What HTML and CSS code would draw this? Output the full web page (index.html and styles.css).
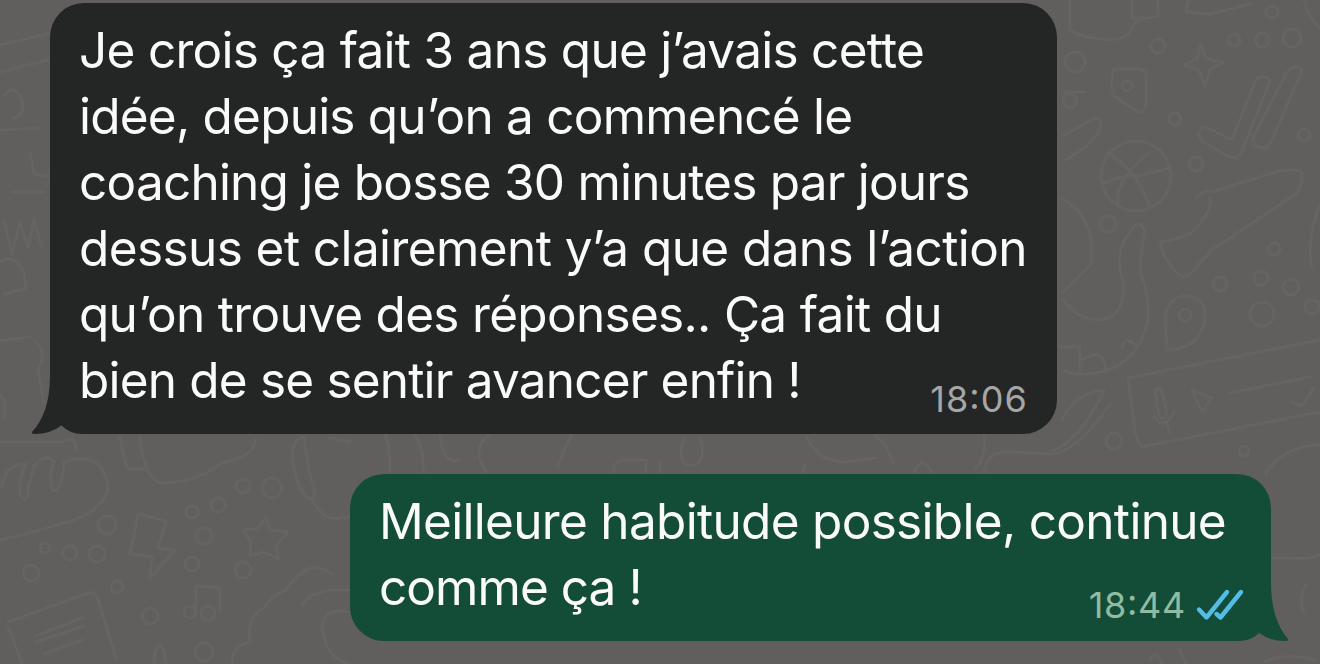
FILE: index.html
```
<!DOCTYPE html>
<html lang="fr">
<head>
    <meta charset="UTF-8">
    <meta name="viewport" content="width=device-width, initial-scale=1.0">
    <title>Discussion</title>
    <link rel="stylesheet" href="styles.css">
</head>
<body>
    <div class="chat">
        <svg class="wallpaper" viewBox="0 0 1320 664" aria-hidden="true">
            <!-- left side -->
            <path d="M0 45 L48 34 M0 72 L48 60 M4 96 q10 -14 18 4 q4 14 -8 18 M2 130 L40 128 M30 152 l4 22 l14 2 M12 192 h32 M4 220 l8 34 l8 -32 l8 26 l6 -30 l8 30 M0 262 q14 -10 24 10 l2 16 l-22 6 M0 341 l30 -4 M34 340 q14 12 4 30 l6 34 M0 394 q8 8 4 24"/>
            <path d="M0 442 h62 q14 -8 14 8 M2 488 q2 -24 24 -24 q-8 18 -6 32 q8 10 8 -8 l6 -22 q12 -14 20 -4 q-6 18 -2 28 q10 4 12 -28 q40 -12 44 26 q-4 22 -40 34 q-40 12 -68 18"/>
            <path d="M120 437 q4 26 8 32 h16 M140 437 q4 40 20 46 q36 0 62 -20 q32 -6 34 -24"/>
            <path d="M304 437 q-16 4 -10 30 q6 32 18 32 q6 -2 -2 -24 q-4 -20 -6 -38 M312 500 q12 22 28 18 l10 -2 M330 438 l20 4"/>
            <path d="M138 514 l28 7 l-8 27 l17 2 l-25 28 l2 -21 l-22 -3 z"/>
            <path d="M266 518 l4 12 l18 2 l-11 12 l1 15 l-14 -7 l-14 4 l1 -14 l-8 -12 l14 -1 z"/>
            <path d="M196 586 v24 M196 586 l24 2 v24"/>
            <circle cx="190" cy="612" r="6"/><circle cx="208" cy="613" r="7"/>
            <path d="M8 622 L88 593 q8 -2 10 6 l18 60 M8 626 l14 38 M36 636 l46 -18 M36 642 l48 -16 M44 654 l38 -14"/>
            <path d="M232 664 q0 -18 18 -22 q-4 -26 14 -34 q6 -12 22 -18 q22 -34 46 -16 M302 606 q8 -18 48 -16 M350 612 q-34 -6 -26 26 q6 22 26 26 M154 664 q2 -30 10 -12 l2 12"/>
            <circle cx="107" cy="525" r="9"/><circle cx="204" cy="536" r="8"/><circle cx="70" cy="553" r="7"/><circle cx="97" cy="554" r="8"/><circle cx="192" cy="512" r="6"/><circle cx="218" cy="505" r="7"/><circle cx="272" cy="488" r="10"/><circle cx="243" cy="486" r="7"/><circle cx="45" cy="548" r="5"/><circle cx="31" cy="573" r="8"/><circle cx="117" cy="587" r="6"/><circle cx="150" cy="616" r="8"/><circle cx="192" cy="564" r="7"/><circle cx="243" cy="570" r="8"/><circle cx="204" cy="652" r="9"/>

            <!-- strip between the messages -->
            <path d="M385 434 q6 16 5 38 M415 434 q10 18 8 38 M440 434 q2 30 18 26 M490 434 q-20 14 -4 38 M572 434 q-10 20 -14 32 M614 472 q-2 -12 12 -12 h20 v12 M660 472 v-10 M684 438 q-8 26 6 28 q18 -2 10 -28 M806 436 q12 26 40 26 l30 -4 M805 464 l-2 8 M874 434 l12 12 l8 18 M914 472 q8 -18 18 0 M984 434 q2 24 -8 34 M984 472 q4 -22 26 -20 l44 2 q24 -4 56 -50"/>

            <!-- right side -->
            <path d="M1070 0 v30 q8 6 24 8 q32 6 38 -10 q0 -8 26 -12 v-16 M1132 0 v18 h14 M1188 0 l-2 12 l24 2 l40 -10 M1304 0 q4 18 16 28"/>
            <path d="M1201 44 l5 14 l18 5 l-14 6 l-5 17 l-6 -16 l-15 -5 l13 -6 z"/>
            <path d="M1113 69 h24 q10 0 9 8 v28 q-2 8 -8 7 l-24 -16 q-4 -12 -1 -27 z"/>
            <path d="M1063 136 l28 -16 q10 -6 10 6 q-6 18 -36 34 M1065 92 h20"/>
            <circle cx="1136" cy="176" r="35"/>
            <path d="M1108 153 q28 16 42 54 M1118 206 q-4 -26 30 -52 M1136 176 l34 -8 M1103 184 q20 -10 33 -8"/>
            <path d="M1200 130 q2 -4 8 -2 l24 12 l22 -56 q4 -10 14 -6 q4 2 0 8 l-24 60 q-6 16 -16 10 l-24 -14 q-8 -6 -4 -12 z M1252 140 l34 -66 q6 -10 14 -6 q4 2 -2 12 l-26 60 q-6 14 -18 4"/>
            <path d="M1196 198 q6 -8 16 -6 l64 -20 q16 -4 26 0 q0 16 -6 22 l-84 56 l-22 24 q-6 6 -14 -2 q-12 -12 -16 -30 q34 -4 42 -22 q10 -12 8 -22"/>
            <path d="M1063 199 q22 12 28 40 v26 q-20 18 -28 28 M1063 299 q16 24 42 20 q20 -4 18 -38 q-10 -30 8 -50 q8 -14 14 0 q-6 26 -4 44 q10 24 6 50 q-10 36 -42 46 q-24 6 -42 0 M1060 347 h20 v24 M1082 360 q22 -14 24 10 M1122 348 q4 -14 14 -2"/>
            <path d="M1165 318 q2 -22 22 -22 q20 2 18 22 q-4 26 -26 30 l-12 2 z"/>
            <path d="M1320 340 L1128 378 l4 30 q4 44 14 38 L1320 412 M1230 393 l80 -16 M1155 390 l6 -2 l6 26 q-4 8 -8 2 z M1154 416 q10 16 20 -4 M1167 424 l2 8 M1192 390 l20 8 l-10 14 z M1292 402 l10 4 l12 -18"/>
            <path d="M1050 452 q30 -10 54 -62 q-30 4 -42 30 M1266 474 q14 -26 54 -30 M1320 204 q-14 36 -8 64"/>
            <path d="M1271 558 h14 q28 2 35 -4 M1306 584 q-8 14 -2 30 M1265 662 q20 -10 50 -2 M1180 650 l6 14 M1150 660 q6 -12 12 4"/>
            <circle cx="1075" cy="62" r="10"/><circle cx="1070" cy="101" r="7"/><circle cx="1158" cy="46" r="7"/><circle cx="1272" cy="12" r="6"/><circle cx="1234" cy="40" r="6"/><circle cx="1262" cy="40" r="7"/><circle cx="1292" cy="38" r="9"/><circle cx="1127" cy="86" r="5"/><circle cx="1175" cy="119" r="6"/><circle cx="1304" cy="135" r="6"/><circle cx="1196" cy="164" r="7"/><circle cx="1108" cy="224" r="8"/><circle cx="1220" cy="284" r="7"/><circle cx="1261" cy="278" r="7"/><circle cx="1291" cy="287" r="8"/><circle cx="1262" cy="314" r="12"/><circle cx="1312" cy="307" r="7"/><circle cx="1185" cy="315" r="6"/><circle cx="1274" cy="249" r="6"/><circle cx="1114" cy="441" r="8"/><circle cx="1244" cy="451" r="5"/>
        </svg>

        <div class="messages">
            <div class="bubble received">
                <svg class="tail" viewBox="0 0 50 70"><path d="M18 0 V8 C18 34 12 52 0 65 Q-1 67 3 67 Q18 67 29.500 58.500 Q38 67 50 67 V0 Z"/></svg>
                <p class="text">
                    <span class="line r1">Je crois ça fait 3 ans que j’avais cette</span>
                    <span class="line r2">idée, depuis qu’on a commencé le</span>
                    <span class="line r3">coaching je bosse 30 minutes par jours</span>
                    <span class="line r4">dessus et clairement y’a que dans l’action</span>
                    <span class="line r5">qu’on trouve des réponses.. Ça fait du</span>
                    <span class="line r6">bien de se sentir avancer enfin !</span>
                </p>
                <div class="meta"><span class="time">18:06</span></div>
            </div>

            <div class="bubble sent">
                <svg class="tail" viewBox="0 0 50 70"><path d="M18 0 V8 C18 34 12 52 1 65 Q0 67 4 67 Q19 67 30 59 Q38 67 50 67 V0 Z"/></svg>
                <p class="text">
                    <span class="line s1">Meilleure habitude possible, continue</span>
                    <span class="line s2">comme ça !</span>
                </p>
                <div class="meta">
                    <span class="time">18:44</span>
                    <svg class="checks" viewBox="0 0 48 32"><path d="M3 20.500 L10.500 28.500 L31 3 M20.500 25 L24.500 28.500 L45 3"/></svg>
                </div>
            </div>
        </div>
    </div>
</body>
</html>
```
FILE: styles.css
```
body {
    margin: 0;
    font-family: Inter, "Liberation Sans", sans-serif;
    background-color: #605f5d;
    overflow: hidden;
}

/* wallpaper and messages share one cell */
.chat {
    display: grid;
    width: 1320px;
    height: 664px;
    overflow: hidden;
}

.wallpaper,
.messages {
    grid-area: 1 / 1;
}

.wallpaper {
    width: 1320px;
    height: 664px;
    fill: none;
    stroke: #656462;
    stroke-width: 3;
    stroke-linejoin: round;
    stroke-linecap: round;
}

.messages {
    display: flex;
    flex-direction: column;
    gap: 40px;
    padding: 3px 49px 0 50px;
    z-index: 1;
}

.bubble {
    position: relative;
    box-sizing: border-box;
    padding: 14px 30px 20px 29px;
    border-radius: 34px;
}

/* the tail covers the square corner, so the fill stops short of it */
.received {
    align-self: flex-start;
    width: 1007px;
    height: 431px;
    border-bottom-left-radius: 0;
    background: linear-gradient(#242625, #242625) 0 0 / 100% calc(100% - 60px) no-repeat,
        linear-gradient(#242625, #242625) 31px 100% / 100% 60px no-repeat;
}

.sent {
    align-self: flex-end;
    width: 921px;
    height: 167px;
    border-bottom-right-radius: 0;
    background: linear-gradient(#144d37, #144d37) 0 0 / 100% calc(100% - 60px) no-repeat,
        linear-gradient(#144d37, #144d37) -31px 100% / 100% 60px no-repeat;
}

.text {
    margin: 0;
    color: #fafafa;
    font-size: 49.5px;
    line-height: 66px;
}

.line {
    display: block;
    width: max-content;
    letter-spacing: -0.72px;
}

.r2,
.r3 {
    letter-spacing: -0.78px;
}

.r4 {
    letter-spacing: -0.59px;
}

.r5 {
    letter-spacing: -0.69px;
}

.r6 {
    letter-spacing: -0.81px;
}

.s1 {
    letter-spacing: -0.69px;
}

.s2 {
    letter-spacing: -0.95px;
}

.meta {
    position: absolute;
    right: 29px;
    bottom: 13px;
    display: flex;
    align-items: center;
    gap: 10px;
    color: #a5a6a5;
    font-size: 36px;
    line-height: 44px;
}

.time {
    letter-spacing: 1.1px;
    font-feature-settings: "case";
}

.sent .meta {
    right: 27px;
    bottom: 14px;
    color: #92bba3;
}

.sent .time {
    letter-spacing: 0.7px;
}

.checks {
    flex: none;
    width: 48px;
    height: 32px;
    overflow: visible;
    fill: none;
    stroke: #53bde8;
    stroke-width: 4.4;
    stroke-linecap: round;
    stroke-linejoin: round;
}

.tail {
    position: absolute;
    left: -18px;
    bottom: -3px;
    width: 50px;
    height: 70px;
    fill: #242625;
}

.sent .tail {
    left: auto;
    right: -18px;
    fill: #144d37;
    transform: scaleX(-1);
}
```
